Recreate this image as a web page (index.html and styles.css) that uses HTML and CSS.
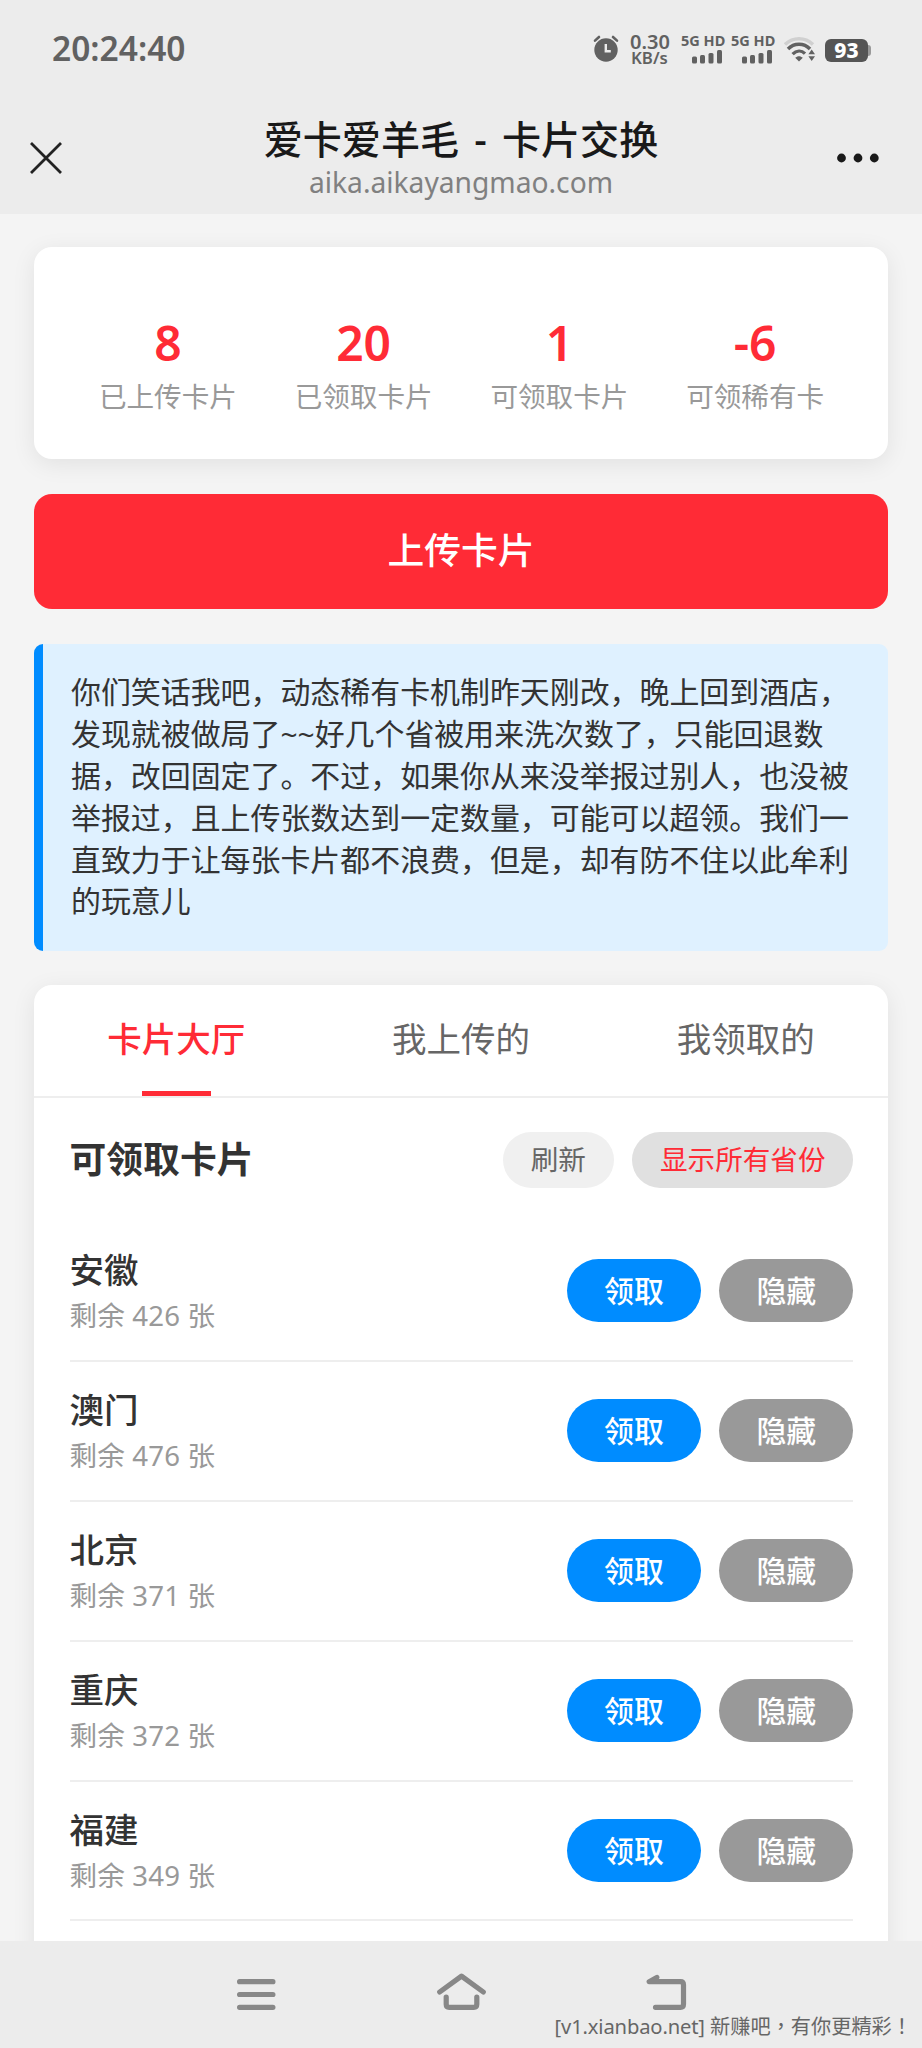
FILE: index.html
```html
<!DOCTYPE html>
<html lang="zh-CN">
<head>
<meta charset="utf-8">
<title>爱卡爱羊毛 - 卡片交换</title>
<link rel="stylesheet" href="styles.css">
</head>
<body>
<div class="screen">
  <header class="top">
    <div class="status">
      <span class="clock">20:24:40</span>
      <div class="status-icons">
        <svg class="alarm" width="26" height="28" viewBox="0 0 26 28"><circle cx="13" cy="16" r="11.7" fill="#616161"/><path d="M2 6.6 6 3M24 6.6 20 3" stroke="#616161" stroke-width="2.6" stroke-linecap="round"/><path d="M12.8 10v7.2h5" fill="none" stroke="#ececec" stroke-width="2.4"/></svg>
        <div class="speed"><span class="speed-num">0.30</span><span class="speed-unit">KB/s</span></div>
        <div class="signal"><span class="net">5G HD</span><svg width="31" height="14" viewBox="0 0 31 14" fill="#616161"><rect x="0" y="6.500" width="5" height="7" rx="1.500"/><rect x="8" y="5" width="5" height="8.500" rx="1.500"/><rect x="16.500" y="3" width="5" height="10.500" rx="1.500"/><rect x="25" y="0" width="5" height="13.500" rx="1.500"/></svg></div>
        <div class="signal"><span class="net">5G HD</span><svg width="31" height="14" viewBox="0 0 31 14" fill="#616161"><rect x="0" y="6.500" width="5" height="7" rx="1.500"/><rect x="8" y="5" width="5" height="8.500" rx="1.500"/><rect x="16.500" y="3" width="5" height="10.500" rx="1.500"/><rect x="25" y="0" width="5" height="13.500" rx="1.500"/></svg></div>
        <svg class="wifi" width="32" height="26" viewBox="0 0 32 26" fill="none"><path d="M1 7.500C9-.2 21-.2 29 7.500" stroke="#d0d0d0" stroke-width="3.400"/><path d="M4 12C10 5.600 20 5.600 26 12" stroke="#616161" stroke-width="3.400"/><path d="M8.600 17.200C12.500 13.200 17.500 13.200 21 16.600" stroke="#616161" stroke-width="3.300"/><path d="M15 24.500 11.200 20.800C13.500 18.700 16.500 18.700 18.800 20.800Z" fill="#616161"/><path d="M27.700 12.500 31 17.200H24.400ZM27.700 24 31 19.300H24.400Z" fill="#616161"/></svg>
        <div class="battery"><span class="battery-body">93</span><span class="battery-nub"></span></div>
      </div>
    </div>
    <div class="titlebar">
      <svg class="close" width="34" height="34" viewBox="0 0 34 34"><path d="M2 2 32 32M32 2 2 32" stroke="#222" stroke-width="2.800"/></svg>
      <div class="heading">
        <h1 class="title">爱卡爱羊毛 - 卡片交换</h1>
        <div class="domain">aika.aikayangmao.com</div>
      </div>
      <svg class="more" width="42" height="10" viewBox="0 0 42 10" fill="#191919"><circle cx="4.500" cy="5" r="4.400"/><circle cx="21" cy="5" r="4.400"/><circle cx="37.300" cy="5" r="4.400"/></svg>
    </div>
  </header>

  <main class="page">
    <section class="stats">
      <div class="stat"><b class="stat-num">8</b><span class="stat-label">已上传卡片</span></div>
      <div class="stat"><b class="stat-num">20</b><span class="stat-label">已领取卡片</span></div>
      <div class="stat"><b class="stat-num">1</b><span class="stat-label">可领取卡片</span></div>
      <div class="stat"><b class="stat-num">-6</b><span class="stat-label">可领稀有卡</span></div>
    </section>

    <button class="upload">上传卡片</button>

    <p class="notice">你们笑话我吧，动态稀有卡机制昨天刚改，晚上回到酒店，发现就被做局了~~好几个省被用来洗次数了，只能回退数据，改回固定了。不过，如果你从来没举报过别人，也没被举报过，且上传张数达到一定数量，可能可以超领。我们一直致力于让每张卡片都不浪费，但是，却有防不住以此牟利的玩意儿</p>

    <section class="hall">
      <nav class="tabs">
        <a class="tab active">卡片大厅</a>
        <a class="tab">我上传的</a>
        <a class="tab">我领取的</a>
      </nav>
      <div class="hall-body">
        <div class="hall-head">
          <h2 class="hall-title">可领取卡片</h2>
          <button class="chip">刷新</button>
          <button class="chip chip-on">显示所有省份</button>
        </div>
        <ul class="rows">
          <li class="row"><div class="info"><div class="name">安徽</div><div class="left">剩余 426 张</div></div><button class="btn take">领取</button><button class="btn hide">隐藏</button></li>
          <li class="row"><div class="info"><div class="name">澳门</div><div class="left">剩余 476 张</div></div><button class="btn take">领取</button><button class="btn hide">隐藏</button></li>
          <li class="row"><div class="info"><div class="name">北京</div><div class="left">剩余 371 张</div></div><button class="btn take">领取</button><button class="btn hide">隐藏</button></li>
          <li class="row"><div class="info"><div class="name">重庆</div><div class="left">剩余 372 张</div></div><button class="btn take">领取</button><button class="btn hide">隐藏</button></li>
          <li class="row"><div class="info"><div class="name">福建</div><div class="left">剩余 349 张</div></div><button class="btn take">领取</button><button class="btn hide">隐藏</button></li>
        </ul>
      </div>
    </section>
  </main>

  <footer class="navbar">
    <div class="keys">
      <svg width="48" height="48" viewBox="0 0 48 48"><path d="M7.600 11.700H40.900M7.600 24.500H40.900M7.600 37.300H40.900" stroke="#888" stroke-width="5.200" stroke-linecap="round"/></svg>
      <svg width="52" height="48" viewBox="0 0 52 48" fill="none" stroke="#888" stroke-width="5.200" stroke-linecap="round" stroke-linejoin="round"><path d="M3.700 22 25.500 6.200 47.300 22"/><path d="M10.200 27V34.300Q10.200 37.300 13.200 37.300H37.800Q40.800 37.300 40.800 34.300V27"/></svg>
      <svg width="48" height="48" viewBox="0 0 48 48" fill="none" stroke="#888" stroke-width="5.200" stroke-linecap="round" stroke-linejoin="round"><path d="M13.800 7.400 6.200 11.700H37.500Q40.500 11.700 40.500 14.700V34.300Q40.500 37.300 37.500 37.300H12.500"/></svg>
    </div>
    <div class="watermark" lang="zh-TW"><span class="site">[v1.xianbao.net]</span> 新赚吧，有你更精彩！</div>
  </footer>
</div>
</body>
</html>
```

FILE: styles.css
```css
* { box-sizing: border-box; }

body {
  margin: 0;
  background: #f4f4f4;
  color: #333;
  font-family: "Noto Sans", "Noto Sans CJK SC", sans-serif;
}

h1, h2, p, ul { margin: 0; padding: 0; }

button {
  border: 0;
  padding: 0;
  font-family: inherit;
}

.screen {
  display: flex;
  flex-direction: column;
  width: 922px;
  height: 2048px;
  overflow: hidden;
}

.top {
  flex: none;
  height: 214px;
  background: #ececec;
}

.status {
  display: flex;
  justify-content: space-between;
  height: 96px;
  padding: 26px 51px 0 52px;
  color: #616161;
}

.clock {
  font-size: 33.5px;
  font-weight: 600;
  line-height: 44px;
}

.status-icons {
  display: flex;
  align-items: flex-start;
  padding-top: 8px;
}

.alarm { margin-right: 11px; }

.speed {
  display: flex;
  flex-direction: column;
  width: 41px;
  margin-right: 10px;
  font-weight: 600;
  white-space: nowrap;
}

.speed-num {
  font-size: 20px;
  line-height: 16px;
}

.speed-unit {
  padding-left: 1px;
  font-size: 16.8px;
  line-height: 15px;
}

.signal {
  display: flex;
  flex-direction: column;
  align-items: flex-end;
  gap: 4px;
  width: 42px;
  margin-right: 8px;
}

.net {
  width: 42px;
  font-size: 14.5px;
  font-weight: 700;
  line-height: 12px;
  white-space: nowrap;
}

.wifi { margin: 3px 9px 0 3px; }

.battery {
  display: flex;
  align-items: center;
  margin-top: 5px;
}

.battery-body {
  width: 43px;
  height: 23px;
  border-radius: 6px;
  background: #555;
  color: #fff;
  font-size: 21px;
  font-weight: 800;
  line-height: 23px;
  text-align: center;
}

.battery-nub {
  width: 3px;
  height: 11px;
  border-radius: 0 3px 3px 0;
  background: #999;
}

.titlebar {
  display: flex;
  align-items: flex-start;
  padding: 20px 43px 0 29px;
}

.close { margin-top: 25px; }

.heading {
  flex: 1;
  padding-left: 22px;
  text-align: center;
}

.title {
  color: #191919;
  font-size: 39.1px;
  font-weight: 500;
  line-height: 46px;
  word-spacing: 5px;
}

.domain {
  color: #808080;
  font-size: 28.2px;
  line-height: 40px;
}

.more { margin-top: 37px; }

.page {
  flex: 1;
  min-height: 0;
  overflow: hidden;
  padding: 33px 34px 0;
}

.stats {
  display: grid;
  grid-template-columns: repeat(4, 1fr);
  height: 212px;
  padding: 66px 35px 0 36px;
  border-radius: 18px;
  background: #fff;
  box-shadow: 0 5px 23px rgba(0, 0, 0, 0.08);
}

.stat {
  display: flex;
  flex-direction: column;
  align-items: center;
}

.stat-num {
  color: #ff2b36;
  font-size: 48px;
  font-weight: 600;
  line-height: 60px;
}

.stat-label {
  margin-top: 4px;
  color: #999;
  font-size: 27.6px;
  line-height: 38px;
}

.upload {
  display: block;
  width: 100%;
  height: 115px;
  margin-top: 35px;
  padding-bottom: 7px;
  border-radius: 18px;
  background: #ff2b36;
  color: #fff;
  font-size: 36.8px;
  font-weight: 500;
}

.notice {
  height: 307px;
  margin-top: 34.5px;
  padding: 27.6px 27px 0 28px;
  border-left: 9px solid #008cff;
  border-radius: 9px;
  background: #dff1ff;
  font-size: 29.93px;
  line-height: 41.86px;
}

.hall {
  height: 1100px;
  margin-top: 34.5px;
  border-radius: 18px;
  background: #fff;
  box-shadow: 0 5px 23px rgba(0, 0, 0, 0.08);
}

.tabs {
  display: grid;
  grid-template-columns: repeat(3, 1fr);
  height: 112.5px;
  border-bottom: 2px solid #eee;
}

.tab {
  display: flex;
  flex-direction: column;
  align-items: center;
  justify-content: space-between;
  padding-top: 30px;
  color: #666;
  font-size: 34.5px;
  line-height: 48px;
}

.tab.active {
  color: #ff2b36;
  font-weight: 500;
}

.tab.active::after {
  content: "";
  width: 69px;
  height: 5px;
  background: #ff2b36;
}

.hall-body { padding: 34.5px 34.7px 0 35.5px; }

.hall-head {
  display: flex;
  align-items: center;
  gap: 18.4px;
  height: 56px;
}

.hall-title {
  flex: 1;
  padding-bottom: 2px;
  font-size: 36.8px;
  font-weight: 600;
  line-height: 50px;
}

.chip {
  height: 56px;
  padding: 0 27.8px 4px;
  border-radius: 28px;
  background: #f0f0f0;
  color: #666;
  font-size: 27.6px;
}

.chip-on {
  background: #e0e0e0;
  color: #ff2b36;
}

.rows {
  margin-top: 34px;
  list-style: none;
}

.row {
  display: flex;
  align-items: center;
  gap: 18.4px;
  height: 139.9px;
  border-bottom: 2px solid #eee;
}

.info {
  flex: 1;
  padding-top: 2px;
}

.name {
  font-size: 34.5px;
  font-weight: 500;
  line-height: 46px;
}

.left {
  color: #999;
  font-size: 27.6px;
  line-height: 44px;
  letter-spacing: 0.15px;
}

.btn {
  width: 134px;
  height: 63px;
  padding-bottom: 4px;
  border-radius: 32px;
  color: #fff;
  font-size: 29.9px;
  font-weight: 500;
}

.take { background: #008cff; }
.hide { background: #999; }

.navbar {
  position: relative;
  z-index: 1;
  flex: none;
  height: 107px;
  background: #ececec;
}

.keys {
  display: flex;
  justify-content: space-between;
  padding: 29px 231px 0 232px;
}

.watermark {
  position: absolute;
  right: 10px;
  bottom: 8px;
  color: #666;
  font-family: "Noto Sans", "Noto Sans CJK TC", sans-serif;
  font-size: 20.2px;
  line-height: 28px;
  white-space: nowrap;
}

.site { letter-spacing: -0.15px; }
```
